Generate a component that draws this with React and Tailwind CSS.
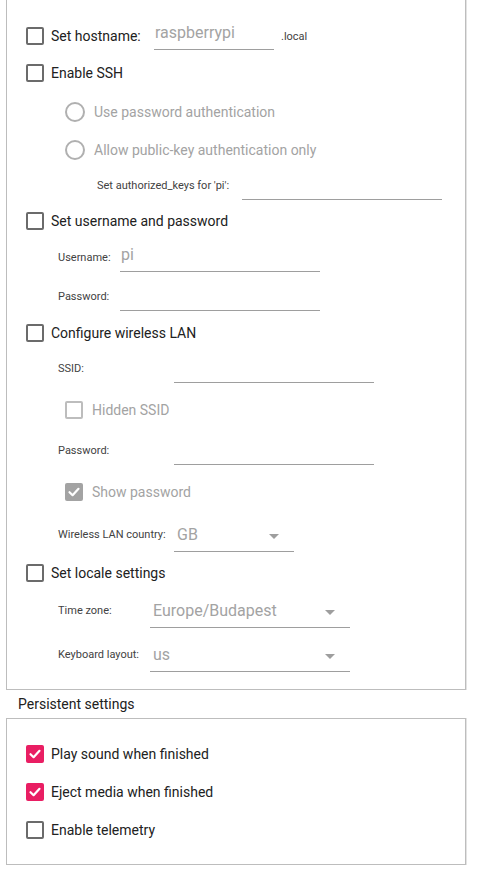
import React from 'react';

const Check = () => (
  <svg width="14" height="14" viewBox="0 0 14 14" fill="none">
    <path d="M2.5 7.2 L5.6 10.2 L11.5 3.8" stroke="white" strokeWidth="2.2" strokeLinecap="round" strokeLinejoin="round" />
  </svg>
);

const Box = ({ checked = false, disabled = false, pink = false }) => {
  if (checked) {
    return (
      <div
        className={`w-[18px] h-[18px] rounded-[2px] flex items-center justify-center shrink-0 ${
          pink ? 'bg-[#e91e63]' : 'bg-[#a3a3a3]'
        }`}
      >
        <Check />
      </div>
    );
  }
  return (
    <div
      className={`w-[18px] h-[18px] rounded-[2px] border-2 shrink-0 ${
        disabled ? 'border-[#bdbdbd]' : 'border-[#6b6b6b]'
      }`}
    />
  );
};

const Radio = () => <div className="w-[20px] h-[20px] rounded-full border-2 border-[#b0b0b0] shrink-0" />;

const CheckRow = ({ label, mt, checked, pink }) => (
  <div className={`h-[30px] flex items-center ${mt}`}>
    <div className="ml-[19px]">
      <Box checked={checked} pink={pink} />
    </div>
    <span className="ml-[7px] text-[14px] text-[#212121]">{label}</span>
  </div>
);

const Field = ({ width, value }) => (
  <div className={`${width} h-[28px] border-b border-[#9e9e9e] pt-[1px] text-[16px] leading-[20px] text-[#a3a3a3] shrink-0`}>
    {value}
  </div>
);

const Caret = () => (
  <svg width="10" height="5" viewBox="0 0 10 5" className="mt-[3px]">
    <path d="M0 0 L10 0 L5 5 Z" fill="#9e9e9e" />
  </svg>
);

const Select = ({ width, value, valueClass = 'pl-[3px]' }) => (
  <div className={`${width} h-[34px] border-b border-[#9e9e9e] flex items-center justify-between pr-[15px] shrink-0`}>
    <span className={`text-[16px] text-[#a3a3a3] ${valueClass}`}>{value}</span>
    <Caret />
  </div>
);

const SmallLabel = ({ children, width }) => (
  <span className={`text-[11px] text-[#424242] ${width} shrink-0`}>{children}</span>
);

export default function App() {
  return (
    <div className="w-[477px] h-[874px] bg-white font-['Roboto',sans-serif] overflow-hidden">
      {/* customisation options */}
      <div className="ml-[6px] w-[460px] h-[690px] border border-t-0 border-[#bdbdbd] shadow-[1px_0_0_#e3e3e3] pt-[21px]">
        <div className="h-[30px] flex items-center">
          <div className="ml-[19px]">
            <Box />
          </div>
          <span className="ml-[7px] text-[14px] text-[#212121] w-[103px] shrink-0">Set hostname:</span>
          <Field width="w-[120px]" value={<span className="pl-[1px]">raspberrypi</span>} />
          <span className="ml-[7px] text-[11px] text-[#424242] mt-[2px]">.local</span>
        </div>

        <CheckRow label="Enable SSH" mt="mt-[7px]" />

        <div className="h-[30px] flex items-center mt-[9px]">
          <div className="ml-[58px]">
            <Radio />
          </div>
          <span className="ml-[9px] text-[14px] text-[#a3a3a3]">Use password authentication</span>
        </div>
        <div className="h-[30px] flex items-center mt-[8px]">
          <div className="ml-[58px]">
            <Radio />
          </div>
          <span className="ml-[9px] text-[14px] text-[#a3a3a3]">Allow public-key authentication only</span>
        </div>

        <div className="h-[30px] flex items-center mt-[6px]">
          <span className="ml-[90px] text-[11px] text-[#424242] w-[145px] shrink-0">Set authorized_keys for 'pi':</span>
          <Field width="w-[200px]" value="" />
        </div>

        <CheckRow label="Set username and password" mt="mt-[5px]" />

        <div className="h-[30px] flex items-center mt-[7px]">
          <div className="ml-[51px] flex items-center">
            <SmallLabel width="w-[62px]">Username:</SmallLabel>
            <Field width="w-[200px]" value={<span className="pl-[1px]">pi</span>} />
          </div>
        </div>
        <div className="h-[30px] flex items-center mt-[9px]">
          <div className="ml-[51px] flex items-center">
            <SmallLabel width="w-[62px]">Password:</SmallLabel>
            <Field width="w-[200px]" value="" />
          </div>
        </div>

        <CheckRow label="Configure wireless LAN" mt="mt-[6px]" />

        <div className="h-[30px] flex items-center mt-[6px]">
          <div className="ml-[51px] flex items-center">
            <SmallLabel width="w-[116px]">SSID:</SmallLabel>
            <Field width="w-[200px]" value="" />
          </div>
        </div>

        <div className="h-[30px] flex items-center mt-[11px]">
          <div className="ml-[58px]">
            <Box disabled />
          </div>
          <span className="ml-[9px] text-[14px] text-[#a3a3a3]">Hidden SSID</span>
        </div>

        <div className="h-[30px] flex items-center mt-[11px]">
          <div className="ml-[51px] flex items-center">
            <SmallLabel width="w-[116px]">Password:</SmallLabel>
            <Field width="w-[200px]" value="" />
          </div>
        </div>

        <div className="h-[30px] flex items-center mt-[11px]">
          <div className="ml-[58px]">
            <Box checked />
          </div>
          <span className="ml-[9px] text-[14px] text-[#a3a3a3]">Show password</span>
        </div>

        <div className="h-[36px] flex items-center mt-[10px]">
          <div className="ml-[51px] flex items-center">
            <SmallLabel width="w-[116px]">Wireless LAN country:</SmallLabel>
            <Select width="w-[120px]" value="GB" />
          </div>
        </div>

        <CheckRow label="Set locale settings" mt="mt-[5px]" />

        <div className="h-[36px] flex items-center mt-[5px]">
          <div className="ml-[51px] flex items-center">
            <SmallLabel width="w-[92px]">Time zone:</SmallLabel>
            <Select width="w-[200px]" value="Europe/Budapest" />
          </div>
        </div>
        <div className="h-[36px] flex items-center mt-[8px]">
          <div className="ml-[51px] flex items-center">
            <SmallLabel width="w-[92px]">Keyboard layout:</SmallLabel>
            <Select width="w-[200px]" value="us" />
          </div>
        </div>
      </div>

      {/* persistent settings */}
      <div className="h-[28px] flex items-center pl-[18px] text-[14px] text-[#212121]">Persistent settings</div>
      <div className="ml-[6px] w-[460px] h-[147px] border border-[#bdbdbd] shadow-[1px_0_0_#e3e3e3] pt-[16px]">
        <div className="h-[38px] flex items-center">
          <div className="ml-[19px]">
            <Box checked pink />
          </div>
          <span className="ml-[7px] text-[14px] text-[#212121]">Play sound when finished</span>
        </div>
        <div className="h-[38px] flex items-center">
          <div className="ml-[19px]">
            <Box checked pink />
          </div>
          <span className="ml-[7px] text-[14px] text-[#212121]">Eject media when finished</span>
        </div>
        <div className="h-[38px] flex items-center">
          <div className="ml-[19px]">
            <Box />
          </div>
          <span className="ml-[7px] text-[14px] text-[#212121]">Enable telemetry</span>
        </div>
      </div>
    </div>
  );
}
